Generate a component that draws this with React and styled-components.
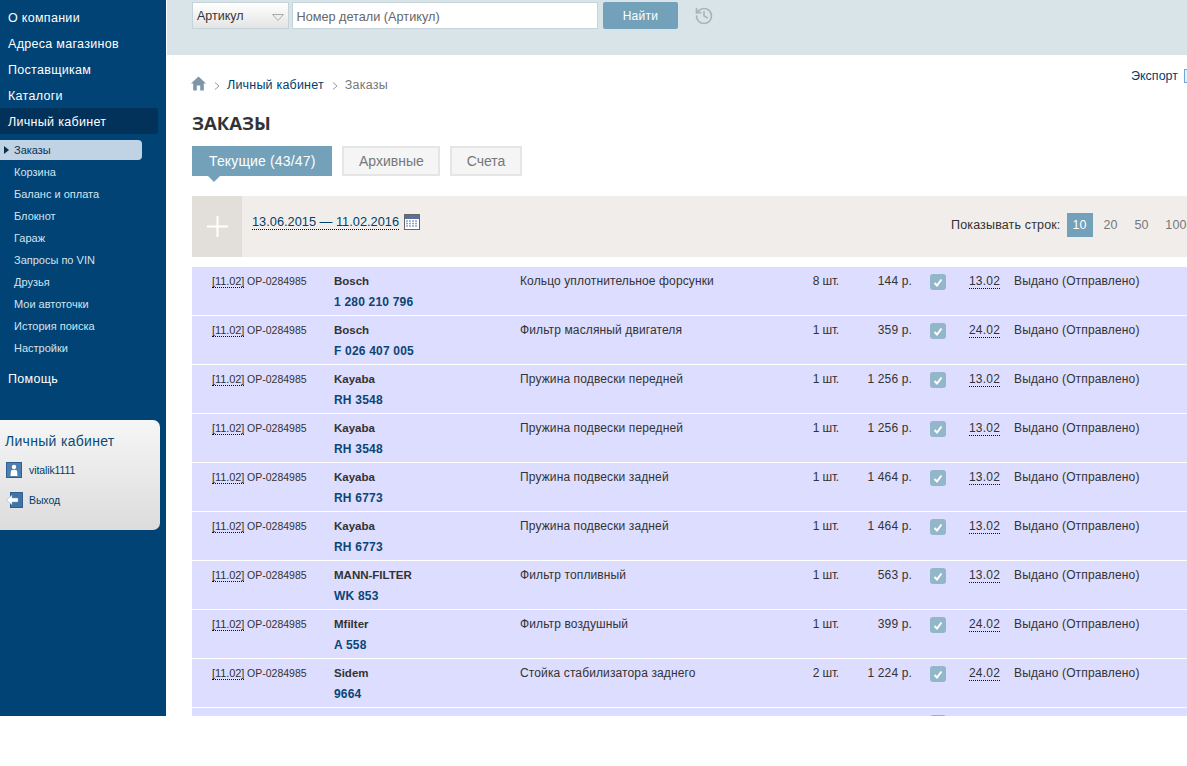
import React from 'react';
import styled, { createGlobalStyle } from 'styled-components';
import { History } from 'lucide-react';

const GlobalStyle = createGlobalStyle`
  html, body {
    margin: 0;
    padding: 0;
    background: #fff;
    font-family: "Liberation Sans", Arial, sans-serif;
    color: #333;
  }
  * { box-sizing: border-box; }
`;

const Page = styled.div`
  display: flex;
  width: 1187px;
  height: 716px;
  overflow: hidden;
`;

const Sidebar = styled.aside`
  flex: 0 0 166px;
  background: #004374;
  padding-top: 4px;
`;

const TopItem = styled.div`
  height: 26px;
  width: 158px;
  padding: 1px 0 0 8px;
  line-height: 26px;
  font-size: 12.5px;
  letter-spacing: 0.3px;
  color: #fff;
  border-radius: 0 3px 3px 0;
  background: ${p => (p.$active ? '#02315a' : 'transparent')};
`;

const SubMenu = styled.div`
  padding: 6px 0 6px;
`;

const SubItem = styled.div`
  position: relative;
  height: ${p => (p.$active ? '20px' : '22px')};
  margin-bottom: ${p => (p.$active ? '1px' : '0')};
  width: 142px;
  padding-left: 14px;
  line-height: ${p => (p.$active ? '20px' : '22px')};
  font-size: 11px;
  color: ${p => (p.$active ? '#0b2f4e' : '#d3e3ef')};
  background: ${p => (p.$active ? '#bfd3e5' : 'transparent')};
  border-radius: 0 4px 4px 0;
  &::before {
    content: ${p => (p.$active ? "''" : 'none')};
    position: absolute;
    left: 4px;
    top: 6px;
    border-left: 5px solid #0b2f4e;
    border-top: 4px solid transparent;
    border-bottom: 4px solid transparent;
  }
`;

const UserPanel = styled.div`
  width: 160px;
  height: 110px;
  margin-top: 29px;
  padding: 13px 0 0 5px;
  border-radius: 0 7px 7px 0;
  background: linear-gradient(#f6f6f6, #dcdcdc);
`;

const PanelTitle = styled.div`
  font-size: 14px;
  letter-spacing: 0.3px;
  color: #0d4a72;
  margin-bottom: 12px;
`;

const PanelLink = styled.div`
  display: flex;
  align-items: center;
  gap: 6px;
  height: 18px;
  margin-bottom: 12px;
  padding-left: 1px;
  font-size: 10.5px;
  letter-spacing: -0.1px;
  color: #003c68;
`;

const Main = styled.main`
  flex: 1;
  min-width: 0;
  margin-left: 1px;
  overflow: hidden;
`;

const SearchBar = styled.div`
  display: flex;
  align-items: flex-start;
  height: 55px;
  padding: 2px 0 0 25px;
  background: #d9e4e9;
`;

const SelectBox = styled.div`
  display: flex;
  align-items: center;
  justify-content: space-between;
  width: 97px;
  height: 27px;
  padding: 1px 4px 0 4px;
  font-size: 12.5px;
  color: #333;
  border: 1px solid #c6d3db;
  background: linear-gradient(#fff, #e4e4e4);
`;

const SelectArrow = styled.svg`
  margin-top: 2px;
`;

const SearchInput = styled.div`
  width: 306px;
  height: 27px;
  margin-left: 3px;
  padding-left: 3.5px;
  line-height: 28px;
  font-size: 12.7px;
  color: #666;
  background: #fff;
  border: 1px solid #c6d3db;
`;

const SearchButton = styled.button`
  width: 75px;
  height: 27px;
  margin-left: 5px;
  padding: 0;
  border: 0;
  border-radius: 2px;
  background: #72a1b9;
  color: #fff;
  font: 12px "Liberation Sans", Arial, sans-serif;
  letter-spacing: 0.3px;
`;

const HistoryWrap = styled.div`
  display: flex;
  margin: 4px 0 0 16px;
  color: #a9b4ba;
`;

const Content = styled.div`
  padding: 19px 0 0 25px;
`;

const CrumbRow = styled.div`
  display: flex;
  justify-content: space-between;
  height: 24px;
`;

const Crumbs = styled.div`
  display: flex;
  align-items: center;
  height: 22px;
  font-size: 12.5px;
  letter-spacing: 0.2px;
`;

const HomeIcon = styled.svg`
  margin: -3px 0 0 -1px;
`;

const CrumbLink = styled.span`
  color: #00406c;
`;

const CrumbCurrent = styled.span`
  color: #777;
`;

const CrumbSep = styled.svg`
  margin: 1px 7px 0 8px;
`;

const ExportLink = styled.div`
  display: flex;
  align-items: center;
  gap: 6px;
  height: 14px;
  margin: -5px -9px 0 0;
  font-size: 12.5px;
  color: #00406c;
`;

const ExportIcon = styled.span`
  width: 12px;
  height: 14px;
  background: #e9f2fb;
  border: 1px solid #6ea4d8;
`;

const Title = styled.h1`
  margin: 13px 0 0;
  height: 27px;
  font: 700 18.5px/23px "Open Sans", sans-serif;
  color: #333;
`;

const Tabs = styled.div`
  display: flex;
  gap: 10px;
  height: 30px;
  margin-top: 8px;
`;

const Tab = styled.div`
  position: relative;
  padding: 0 ${p => (p.$active ? '17px' : '14.5px')};
  line-height: ${p => (p.$active ? '30px' : '26px')};
  font-size: 14px;
  letter-spacing: ${p => (p.$active ? '0.15px' : '0')};
  color: ${p => (p.$active ? '#fff' : '#777')};
  background: ${p => (p.$active ? '#72a1b9' : '#f5f5f5')};
  border: ${p => (p.$active ? '0' : '2px solid #e5e5e5')};
  &::after {
    content: ${p => (p.$active ? "''" : 'none')};
    position: absolute;
    left: 16px;
    bottom: -6px;
    border-top: 6px solid #72a1b9;
    border-left: 6px solid transparent;
    border-right: 6px solid transparent;
  }
`;

const Toolbar = styled.div`
  display: flex;
  align-items: center;
  height: 61px;
  margin-top: 20px;
  background: #f0edea;
`;

const AddBlock = styled.div`
  display: flex;
  align-items: center;
  justify-content: center;
  align-self: stretch;
  flex: 0 0 50px;
  background: #e2ded9;
`;

const DateRange = styled.span`
  margin: -10px 0 0 10px;
  font-size: 12.8px;
  color: #00406c;
  border-bottom: 1px dotted #111;
`;

const CalendarIcon = styled.svg`
  margin: -9px 0 0 5px;
`;

const PageSizes = styled.div`
  display: flex;
  align-items: center;
  margin: -4px -8px 0 auto;
  font-size: 12.5px;
  letter-spacing: 0.15px;
  color: #333;
`;

const SizeOption = styled.span`
  display: block;
  width: ${p => p.$width}px;
  height: 24px;
  margin: ${p => (p.$active ? '0 2.5px 0 6px' : '0')};
  line-height: 24px;
  text-align: center;
  color: ${p => (p.$active ? '#fff' : '#777')};
  background: ${p => (p.$active ? '#72a1b9' : 'transparent')};
`;

const OrdersTable = styled.div`
  margin-top: 10px;
`;

const Row = styled.div`
  display: grid;
  grid-template-columns: 122px 186px 280px 39px 73px 57px 45px 1fr;
  height: 48px;
  margin-bottom: 1px;
  padding: 7px 0 0 20px;
  font-size: 12px;
  line-height: 14px;
  background: #ddf;
`;

const OrderCell = styled.div`
  font-size: 10.5px;
`;

const Dotted = styled.span`
  font-size: 11px;
  letter-spacing: -0.1px;
  border-bottom: 1px dotted #111;
`;

const PartCell = styled.div`
  display: flex;
  flex-direction: column;
  gap: 7px;
`;

const Brand = styled.b`
  font-size: 11.5px;
  font-weight: 700;
  color: #333;
`;

const PartNumber = styled.b`
  font-weight: 700;
  letter-spacing: 0.2px;
  color: #0a4675;
`;

const NameCell = styled.div`
  letter-spacing: 0.12px;
`;

const RightCell = styled.div`
  text-align: right;
  letter-spacing: ${p => p.$spacing || '0.15px'};
`;

const CheckCell = styled.div`
  padding-left: 18px;
`;

const CheckBox = styled.span`
  display: flex;
  align-items: center;
  justify-content: center;
  width: 16px;
  height: 16px;
  border-radius: 3px;
  background: #92b6ca;
`;

const DueDate = styled.span`
  justify-self: start;
  height: 15px;
  letter-spacing: 0.2px;
  border-bottom: 1px dotted #111;
`;

const StatusCell = styled.div`
  letter-spacing: 0.15px;
`;

const topMenu = ['О компании', 'Адреса магазинов', 'Поставщикам', 'Каталоги'];
const subMenu = ['Корзина', 'Баланс и оплата', 'Блокнот', 'Гараж', 'Запросы по VIN', 'Друзья', 'Мои автоточки', 'История поиска', 'Настройки'];

const orders = [
  { brand: 'Bosch', part: '1 280 210 796', name: 'Кольцо уплотнительное форсунки', qty: '8 шт.', price: '144 р.', due: '13.02' },
  { brand: 'Bosch', part: 'F 026 407 005', name: 'Фильтр масляный двигателя', qty: '1 шт.', price: '359 р.', due: '24.02' },
  { brand: 'Kayaba', part: 'RH 3548', name: 'Пружина подвески передней', qty: '1 шт.', price: '1 256 р.', due: '13.02' },
  { brand: 'Kayaba', part: 'RH 3548', name: 'Пружина подвески передней', qty: '1 шт.', price: '1 256 р.', due: '13.02' },
  { brand: 'Kayaba', part: 'RH 6773', name: 'Пружина подвески задней', qty: '1 шт.', price: '1 464 р.', due: '13.02' },
  { brand: 'Kayaba', part: 'RH 6773', name: 'Пружина подвески задней', qty: '1 шт.', price: '1 464 р.', due: '13.02' },
  { brand: 'MANN-FILTER', part: 'WK 853', name: 'Фильтр топливный', qty: '1 шт.', price: '563 р.', due: '13.02' },
  { brand: 'Mfilter', part: 'A 558', name: 'Фильтр воздушный', qty: '1 шт.', price: '399 р.', due: '24.02' },
  { brand: 'Sidem', part: '9664', name: 'Стойка стабилизатора заднего', qty: '2 шт.', price: '1 224 р.', due: '24.02' },
];

function Chevron() {
  return (
    <CrumbSep width="6" height="8" viewBox="0 0 6 8">
      <path d="M1 0.5 L5 4 L1 7.5" fill="none" stroke="#999" strokeWidth="1" />
    </CrumbSep>
  );
}

function Check() {
  return (
    <CheckBox>
      <svg width="10" height="9" viewBox="0 0 10 9">
        <path d="M1.5 5 L4 7.5 L8.5 1.5" fill="none" stroke="#fff" strokeWidth="2" />
      </svg>
    </CheckBox>
  );
}

export default function App() {
  return (
    <>
      <GlobalStyle />
      <Page>
        <Sidebar>
          {topMenu.map(item => <TopItem key={item}>{item}</TopItem>)}
          <TopItem $active>Личный кабинет</TopItem>
          <SubMenu>
            <SubItem $active>Заказы</SubItem>
            {subMenu.map(item => <SubItem key={item}>{item}</SubItem>)}
          </SubMenu>
          <TopItem>Помощь</TopItem>
          <UserPanel>
            <PanelTitle>Личный кабинет</PanelTitle>
            <PanelLink>
              <svg width="17" height="16" viewBox="0 0 17 16">
                <rect x="0.5" y="0.5" width="15" height="15" fill="#4f7fae" stroke="#2f5f8e" />
                <circle cx="8" cy="5" r="2.2" fill="#fff" />
                <path d="M4.5 14 L5 8.5 Q8 6.8 11 8.5 L11.5 14 Z" fill="#fff" />
              </svg>
              vitalik1111
            </PanelLink>
            <PanelLink>
              <svg width="17" height="16" viewBox="0 0 17 16">
                <rect x="4.5" y="0.5" width="12" height="15" fill="#3f74a6" stroke="#2f5f8e" />
                <path d="M0.5 8 L6 3 L6 6 L12 6 L12 10 L6 10 L6 13 Z" fill="#fff" stroke="#7fa5c8" strokeWidth="0.5" />
              </svg>
              Выход
            </PanelLink>
          </UserPanel>
        </Sidebar>
        <Main>
          <SearchBar>
            <SelectBox>
              Артикул
              <SelectArrow width="12" height="7" viewBox="0 0 12 7">
                <path d="M0.5 0.5 L11.5 0.5 L6 6.5 Z" fill="#eee" stroke="#aaa" />
              </SelectArrow>
            </SelectBox>
            <SearchInput>Номер детали (Артикул)</SearchInput>
            <SearchButton>Найти</SearchButton>
            <HistoryWrap><History size={20} strokeWidth={2} /></HistoryWrap>
          </SearchBar>
          <Content>
            <CrumbRow>
              <Crumbs>
                <HomeIcon width="15" height="15" viewBox="0 0 15 15">
                  <path d="M7.5 0.5 L15 7.5 L12.8 7.5 L12.8 14.5 L9.2 14.5 L9.2 9.5 L5.8 9.5 L5.8 14.5 L2.2 14.5 L2.2 7.5 L0 7.5 Z" fill="#7f95a8" />
                </HomeIcon>
                <Chevron />
                <CrumbLink>Личный кабинет</CrumbLink>
                <Chevron />
                <CrumbCurrent>Заказы</CrumbCurrent>
              </Crumbs>
              <ExportLink>Экспорт <ExportIcon /></ExportLink>
            </CrumbRow>
            <Title>ЗАКАЗЫ</Title>
            <Tabs>
              <Tab $active>Текущие (43/47)</Tab>
              <Tab>Архивные</Tab>
              <Tab>Счета</Tab>
            </Tabs>
            <Toolbar>
              <AddBlock>
                <svg width="21" height="21" viewBox="0 0 21 21">
                  <path d="M10.5 0 V21 M0 10.5 H21" stroke="#fff" strokeWidth="2" />
                </svg>
              </AddBlock>
              <DateRange>13.06.2015 — 11.02.2016</DateRange>
              <CalendarIcon width="16" height="16" viewBox="0 0 16 16">
                <rect x="0.5" y="0.5" width="15" height="15" fill="#fff" stroke="#666" />
                <rect x="1" y="1" width="14" height="4" fill="#5a6f9c" />
                <path d="M2 7 H14 M2 9.5 H14 M2 12 H14" stroke="#8ea2c8" strokeWidth="1.4" strokeDasharray="2 1" />
              </CalendarIcon>
              <PageSizes>
                Показывать строк:
                <SizeOption $active $width={26}>10</SizeOption>
                <SizeOption $width={31}>20</SizeOption>
                <SizeOption $width={31}>50</SizeOption>
                <SizeOption $width={38}>100</SizeOption>
              </PageSizes>
            </Toolbar>
            <OrdersTable>
              {orders.map((o, i) => (
                <Row key={i}>
                  <OrderCell><Dotted>[11.02]</Dotted> ОР-0284985</OrderCell>
                  <PartCell>
                    <Brand>{o.brand}</Brand>
                    <PartNumber>{o.part}</PartNumber>
                  </PartCell>
                  <NameCell>{o.name}</NameCell>
                  <RightCell $spacing="-0.2px">{o.qty}</RightCell>
                  <RightCell>{o.price}</RightCell>
                  <CheckCell><Check /></CheckCell>
                  <DueDate>{o.due}</DueDate>
                  <StatusCell>Выдано (Отправлено)</StatusCell>
                </Row>
              ))}
              <Row>
                <div />
                <div />
                <div />
                <div />
                <div />
                <CheckCell><Check /></CheckCell>
              </Row>
            </OrdersTable>
          </Content>
        </Main>
      </Page>
    </>
  );
}
